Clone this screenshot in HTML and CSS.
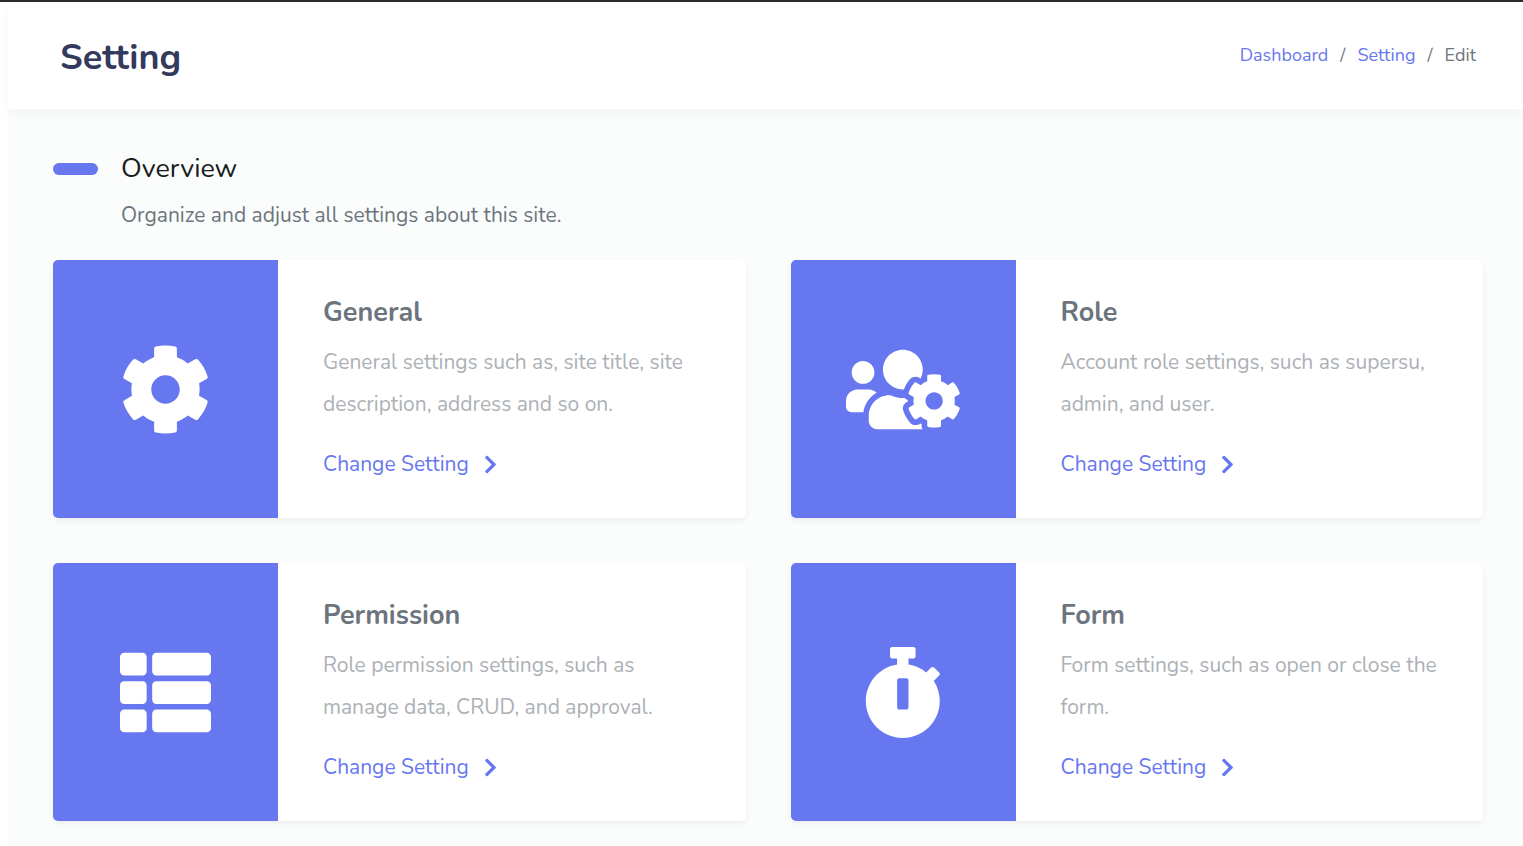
FILE: index.html
```html
<!DOCTYPE html>
<html lang="en">
<head>
<meta charset="utf-8">
<meta name="viewport" content="width=device-width, initial-scale=1">
<title>Setting</title>
<link rel="stylesheet" href="styles.css">
</head>
<body>
<svg class="sprite" aria-hidden="true">
  <symbol id="chevron" viewBox="0 0 320 512"><path d="M285.476 272.971L91.132 467.314c-9.373 9.373-24.569 9.373-33.941 0l-22.667-22.667c-9.357-9.357-9.375-24.522-.04-33.901L188.505 256 34.484 101.255c-9.335-9.379-9.317-24.544.04-33.901l22.667-22.667c9.373-9.373 24.569-9.373 33.941 0L285.475 239.03c9.373 9.372 9.373 24.568.001 33.941z"/></symbol>
</svg>
<main class="page">
  <header class="page-header">
    <h1 class="page-title">Setting</h1>
    <nav aria-label="Breadcrumb">
      <ol class="breadcrumb">
        <li><a href="#">Dashboard</a></li>
        <li><a href="#">Setting</a></li>
        <li aria-current="page">Edit</li>
      </ol>
    </nav>
  </header>
  <section class="content">
    <h2 class="section-title">Overview</h2>
    <p class="section-lead">Organize and adjust all settings about this site.</p>
    <div class="cards">
      <article class="card">
        <div class="card-icon">
          <svg class="icon" viewBox="0 0 512 512" aria-hidden="true"><path d="M487.4 315.7l-42.6-24.6c4.3-23.2 4.3-47 0-70.2l42.6-24.6c4.9-2.8 7.1-8.6 5.5-14-11.1-35.6-30-67.8-54.7-94.6-3.8-4.1-10-5.1-14.8-2.3L380.8 110c-17.9-15.4-38.5-27.3-60.8-35.1V25.8c0-5.6-3.9-10.5-9.4-11.7-36.7-8.2-74.3-7.8-109.2 0-5.5 1.2-9.4 6.1-9.4 11.7V75c-22.2 7.9-42.8 19.8-60.8 35.1L88.7 85.5c-4.9-2.8-11-1.9-14.8 2.3-24.7 26.7-43.6 58.9-54.7 94.6-1.7 5.4.6 11.2 5.5 14L67.3 221c-4.3 23.2-4.3 47 0 70.2l-42.6 24.6c-4.9 2.8-7.1 8.6-5.5 14 11.1 35.6 30 67.8 54.7 94.6 3.8 4.1 10 5.1 14.8 2.3l42.6-24.6c17.9 15.4 38.5 27.3 60.8 35.1v49.2c0 5.6 3.9 10.5 9.4 11.7 36.7 8.2 74.3 7.8 109.2 0 5.5-1.2 9.4-6.1 9.4-11.7v-49.2c22.2-7.9 42.8-19.8 60.8-35.1l42.6 24.6c4.9 2.8 11 1.9 14.8-2.3 24.7-26.7 43.6-58.9 54.7-94.6 1.5-5.5-.7-11.3-5.6-14.1zM256 336c-44.1 0-80-35.9-80-80s35.9-80 80-80 80 35.9 80 80-35.9 80-80 80z"/></svg>
        </div>
        <div class="card-body">
          <h3 class="card-title">General</h3>
          <p class="card-text">General settings such as, site title, site description, address and so on.</p>
          <a class="card-link" href="#">Change Setting <svg class="chevron" aria-hidden="true"><use href="#chevron"/></svg></a>
        </div>
      </article>
      <article class="card">
        <div class="card-icon">
          <svg class="icon" viewBox="0 0 640 512" aria-hidden="true"><path d="M610.5 341.3c2.6-14.1 2.6-28.5 0-42.6l25.8-14.9c3-1.7 4.3-5.2 3.3-8.5-6.7-21.6-18.2-41.2-33.2-57.4-2.3-2.5-6-3.1-9-1.4l-25.8 14.9c-10.9-9.3-23.4-16.5-36.9-21.3v-29.8c0-3.4-2.4-6.4-5.7-7.1-22.3-5-45-4.8-66.2 0-3.3.7-5.7 3.7-5.7 7.1v29.8c-13.5 4.8-26 12-36.9 21.3l-25.8-14.9c-2.9-1.7-6.7-1.1-9 1.4-15 16.2-26.5 35.8-33.2 57.4-1 3.3.4 6.8 3.3 8.5l25.8 14.9c-2.6 14.1-2.6 28.5 0 42.6l-25.8 14.9c-3 1.7-4.3 5.2-3.3 8.5 6.7 21.6 18.2 41.1 33.2 57.4 2.3 2.5 6 3.1 9 1.4l25.8-14.9c10.9 9.3 23.4 16.5 36.9 21.3v29.8c0 3.4 2.4 6.4 5.7 7.1 22.3 5 45 4.8 66.2 0 3.3-.7 5.7-3.7 5.7-7.1v-29.8c13.5-4.8 26-12 36.9-21.3l25.8 14.9c2.9 1.7 6.7 1.1 9-1.4 15-16.2 26.5-35.8 33.2-57.4 1-3.3-.4-6.8-3.3-8.5l-25.8-14.9zM496 368.5c-26.8 0-48.5-21.8-48.5-48.5s21.8-48.5 48.5-48.5 48.5 21.8 48.5 48.5-21.7 48.5-48.5 48.5zM96 224c35.3 0 64-28.7 64-64s-28.7-64-64-64-64 28.7-64 64 28.7 64 64 64zm224 32c1.9 0 3.7-.5 5.6-.6 8.3-21.7 20.5-42.1 36.3-59.2 7.4-8 17.9-12.6 28.9-12.6 6.9 0 13.7 1.8 19.6 5.3l7.9 4.6c.8-.5 1.6-.9 2.4-1.4 7-14.6 11.2-30.8 11.2-48 0-61.9-50.1-112-112-112S208 82.1 208 144c0 61.9 50.1 112 112 112zm105.2 194.5c-2.3-1.2-4.6-2.6-6.8-3.9-8.2 4.8-15.3 9.8-27.5 9.8-10.9 0-21.4-4.6-28.9-12.6-18.3-19.8-32.3-43.9-40.2-69.6-10.7-34.5 24.9-49.7 25.8-50.3-.1-2.6-.1-5.2 0-7.8l-7.9-4.6c-3.8-2.2-7-5-9.8-8.1-3.3.2-6.5.6-9.8.6-24.6 0-47.6-6-68.5-16h-8.3C179.6 288 128 339.6 128 403.2V432c0 26.5 21.5 48 48 48h255.4c-3.7-6-6.2-12.8-6.2-20.3v-9.2zM173.1 274.6C161.5 263.1 145.6 256 128 256H64c-35.3 0-64 28.7-64 64v32c0 17.7 14.3 32 32 32h65.9c6.3-47.4 34.9-87.3 75.2-109.4z"/></svg>
        </div>
        <div class="card-body">
          <h3 class="card-title">Role</h3>
          <p class="card-text">Account role settings, such as supersu, admin, and user.</p>
          <a class="card-link" href="#">Change Setting <svg class="chevron" aria-hidden="true"><use href="#chevron"/></svg></a>
        </div>
      </article>
      <article class="card">
        <div class="card-icon">
          <svg class="icon" viewBox="0 0 512 512" aria-hidden="true">
            <rect x="0" y="32" width="150" height="128" rx="24"/><rect x="181" y="32" width="331" height="128" rx="24"/>
            <rect x="0" y="192" width="150" height="128" rx="24"/><rect x="181" y="192" width="331" height="128" rx="24"/>
            <rect x="0" y="352" width="150" height="128" rx="24"/><rect x="181" y="352" width="331" height="128" rx="24"/>
          </svg>
        </div>
        <div class="card-body">
          <h3 class="card-title">Permission</h3>
          <p class="card-text">Role permission settings, such as manage data, CRUD, and approval.</p>
          <a class="card-link" href="#">Change Setting <svg class="chevron" aria-hidden="true"><use href="#chevron"/></svg></a>
        </div>
      </article>
      <article class="card">
        <div class="card-icon">
          <svg class="icon" viewBox="0 0 448 512" aria-hidden="true"><path d="M432 304c0 114.9-93.1 208-208 208S16 418.9 16 304c0-104 76.3-190.2 176-205.5V64h-28c-6.6 0-12-5.4-12-12V12c0-6.6 5.4-12 12-12h120c6.6 0 12 5.4 12 12v40c0 6.6-5.4 12-12 12h-28v34.5c37.5 5.8 71.7 21.6 99.7 44.6l27.5-27.5c4.7-4.7 12.3-4.7 17 0l28.3 28.3c4.7 4.7 4.7 12.3 0 17l-29.4 29.4-.6.6C419.7 223.3 432 262.2 432 304zm-176 36V188.5c0-6.6-5.4-12-12-12h-40c-6.6 0-12 5.4-12 12V340c0 6.6 5.4 12 12 12h40c6.6 0 12-5.4 12-12z"/></svg>
        </div>
        <div class="card-body">
          <h3 class="card-title">Form</h3>
          <p class="card-text">Form settings, such as open or close the form.</p>
          <a class="card-link" href="#">Change Setting <svg class="chevron" aria-hidden="true"><use href="#chevron"/></svg></a>
        </div>
      </article>
    </div>
  </section>
</main>
</body>
</html>
```
FILE: styles.css
```css
* {
  box-sizing: border-box;
}

body {
  margin: 0;
  padding-left: 8px;
  border-top: 2px solid #2b2b2e;
  background: #fff;
  color: #6c757d;
  font-family: Nunito, Lato, "Open Sans", sans-serif;
  font-size: 21px;
  line-height: 42px;
}

h1, h2, h3, p, ol {
  margin: 0;
  padding: 0;
}

a {
  color: #6777ef;
  text-decoration: none;
}

.sprite {
  display: none;
}

.page {
  min-height: calc(100vh - 2px);
  background: #fbfdfc;
}

.page-header {
  display: flex;
  align-items: flex-start;
  justify-content: space-between;
  padding: 32px 47px 27px 52px;
  background: #fff;
  box-shadow: 0 5px 16px rgba(0, 0, 0, 0.04);
}

.page-title {
  color: #34395e;
  font-size: 36px;
  font-weight: 700;
  line-height: 48px;
}

.breadcrumb {
  display: flex;
  list-style: none;
  font-size: 18px;
}

.breadcrumb li + li::before {
  content: "/";
  padding: 0 12px;
}

.content {
  padding: 39px 40px 25px 45px;
}

.section-title {
  display: flex;
  align-items: center;
  gap: 23px;
  color: #191d21;
  font-size: 27px;
  font-weight: 400;
}

.section-title::before {
  content: "";
  width: 45px;
  height: 12px;
  border-radius: 6px;
  background: #6777ef;
}

.section-lead {
  padding: 4px 0 0 68px;
}

.cards {
  display: grid;
  grid-template-columns: 1fr 1fr;
  gap: 45px;
  margin-top: 24px;
}

.card {
  display: flex;
  overflow: hidden;
  border-radius: 5px;
  background: #fff;
  box-shadow: 0 3px 6px rgba(0, 0, 0, 0.06);
}

.card-icon {
  display: flex;
  flex: 0 0 225px;
  align-items: center;
  justify-content: center;
  background: #6777ef;
  color: #fff;
}

.icon {
  height: 91px;
  fill: currentColor;
}

.card-body {
  flex: 1;
  padding: 32px 45px 33px;
}

.card-title {
  font-size: 27px;
  font-weight: 700;
}

.card-text {
  margin: 7px 0 18px;
  color: #acb1b6;
}

.card-link {
  display: flex;
  align-items: center;
  gap: 15px;
}

.chevron {
  width: 13px;
  height: 21px;
  fill: currentColor;
}
```
